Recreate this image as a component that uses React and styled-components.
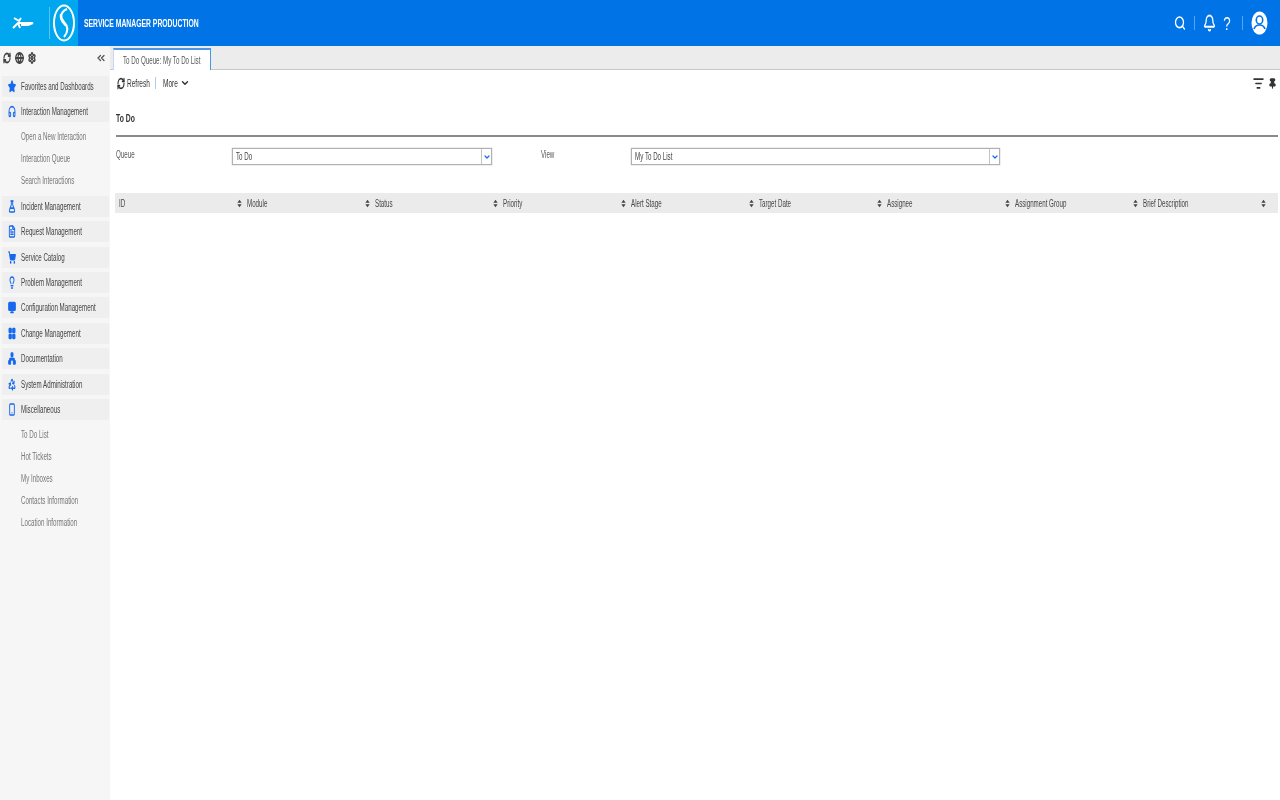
import React from "react";
import styled, { createGlobalStyle } from "styled-components";
import {
  Bell,
  ChevronDown,
  ChevronsLeft,
  Search,
  RefreshCw,
  Star,
  Headphones,
  FlaskConical,
  FileText,
  ShoppingCart,
  Lightbulb,
  Monitor,
  LayoutGrid,
  Network,
  Recycle,
  Smartphone,
  Settings,
  Pin,
  ListFilter,
  Globe,
} from "lucide-react";

const GlobalStyle = createGlobalStyle`
  html, body {
    margin: 0;
    height: 100%;
    background: #fff;
    font-family: "Liberation Sans", Arial, sans-serif;
  }
  #root {
    height: 100%;
  }
`;

const Page = styled.div`
  width: 1280px;
  height: 800px;
  display: flex;
  flex-direction: column;
  overflow: hidden;
  filter: blur(0.4px);
`;

// the screenshot is squeezed sideways, so the text is too
const Squeezed = styled.span`
  display: inline-block;
  white-space: nowrap;
  transform: scaleX(0.62);
  transform-origin: left center;
`;

const Header = styled.header`
  height: 46px;
  flex: none;
  display: flex;
  align-items: center;
  background: #0073e7;
  color: #fff;
`;

const Brand = styled.div`
  width: 78px;
  height: 100%;
  flex: none;
  display: flex;
  align-items: center;
  background: #00a7ee;
`;

const BrandBird = styled.div`
  width: 50px;
  height: 32px;
  flex: none;
  display: flex;
  justify-content: center;
  align-items: center;
  padding-right: 4px;
  box-sizing: border-box;
  border-right: 1px solid rgba(255, 255, 255, 0.35);
`;

const BrandMark = styled.div`
  flex: 1;
  display: flex;
  justify-content: center;
`;

const ProductName = styled.div`
  margin-left: 6px;
  font-size: 11px;
  font-weight: 700;
`;

const HeaderTools = styled.div`
  margin-left: auto;
  margin-right: 12px;
  display: flex;
  align-items: center;
  gap: 8px;
`;

const ToolDivider = styled.span`
  width: 1px;
  height: 14px;
  background: rgba(255, 255, 255, 0.35);
`;

const HelpMark = styled.span`
  width: 10px;
  margin: 0 2px 0 -2px;
  display: flex;
  justify-content: center;
  font-size: 19px;
  line-height: 1;
  transform: scaleX(0.7);
`;

const Body = styled.div`
  flex: 1;
  display: flex;
  min-height: 0;
`;

const Sidebar = styled.aside`
  width: 110px;
  flex: none;
  background: #f6f6f6;
  display: flex;
  flex-direction: column;
`;

const SideTop = styled.div`
  height: 24px;
  display: flex;
  align-items: center;
  padding: 0 3px;
  gap: 4px;
  color: #444;
  margin-bottom: 6px;
`;

const Collapse = styled.span`
  margin-left: auto;
  display: flex;
  color: #555;
`;

const NavItem = styled.div`
  height: 21px;
  margin: 0 1px 4.4px 2px;
  padding-left: 6px;
  display: flex;
  align-items: center;
  gap: 5px;
  background: #efefef;
  font-size: 10px;
  color: #444;
  svg {
    color: #1668ef;
    flex: none;
  }
`;

const SubList = styled.div`
  display: flex;
  flex-direction: column;
  margin-top: -1px;
  padding-bottom: 4px;
`;

const SubItem = styled.div`
  height: 22px;
  padding-left: 21px;
  display: flex;
  align-items: center;
  font-size: 10px;
  color: #777;
`;

const Main = styled.main`
  flex: 1;
  min-width: 0;
  display: flex;
  flex-direction: column;
`;

const TabStrip = styled.div`
  height: 24px;
  flex: none;
  box-sizing: border-box;
  display: flex;
  align-items: flex-end;
  padding-left: 3px;
  background: #ececec;
  border-bottom: 1px solid #c8c8c8;
`;

const Tab = styled.div`
  width: 98px;
  height: 22px;
  margin-bottom: -1px;
  padding-left: 9px;
  display: flex;
  align-items: center;
  box-sizing: border-box;
  background: #fff;
  border-top: 2px solid #4a97e8;
  border-left: 1px solid #c5daf2;
  border-right: 1px solid #4a97e8;
  font-size: 10px;
  color: #555;
`;

const Toolbar = styled.div`
  height: 26px;
  flex: none;
  display: flex;
  align-items: center;
  padding: 0 3px 0 7px;
  font-size: 10.5px;
  color: #333;
`;

const ToolButton = styled.span`
  width: ${(props) => props.$width}px;
  flex: none;
  display: flex;
  align-items: center;
  gap: 2px;
  svg {
    flex: none;
  }
`;

const ToolSeparator = styled.span`
  width: 1px;
  height: 12px;
  margin-right: 7px;
  background: #a9cdf3;
`;

const ToolEnd = styled.span`
  margin-left: auto;
  display: flex;
  align-items: center;
  gap: 4px;
  color: #333;
`;

const Content = styled.div`
  padding: 0 2px 0 6px;
`;

const Title = styled.h1`
  margin: 0;
  height: 41px;
  display: flex;
  align-items: center;
  padding-top: 4px;
  box-sizing: border-box;
  font-size: 11px;
  font-weight: 700;
  color: #333;
  border-bottom: 2px solid #8a8a8a;
`;

const FilterRow = styled.div`
  display: flex;
  align-items: flex-start;
  margin-top: 11px;
`;

const FieldLabel = styled.label`
  width: ${(props) => props.$width}px;
  flex: none;
  padding-top: 1px;
  font-size: 10px;
  color: #555;
`;

const SelectBox = styled.div`
  width: ${(props) => props.$width}px;
  height: 17px;
  flex: none;
  display: flex;
  box-sizing: border-box;
  border: 1px solid #b0b0b0;
  box-shadow: 0 0 1px #999;
  background: #fff;
`;

const SelectValue = styled.span`
  flex: 1;
  padding-left: 3px;
  font-size: 10px;
  line-height: 15px;
  color: #444;
`;

const SelectArrow = styled.span`
  width: 9px;
  display: flex;
  align-items: center;
  justify-content: center;
  border-left: 1px solid #c4c4c4;
  color: #1668ef;
`;

const FieldGap = styled.div`
  width: 49px;
  flex: none;
`;

const Grid = styled.div`
  margin: 28px 0 0 -1px;
  height: 20px;
  display: grid;
  grid-template-columns: repeat(9, 128px) 12px;
  background: #ebebeb;
`;

const Column = styled.div`
  display: flex;
  align-items: center;
  padding: 1px 0 0 4px;
  font-size: 10px;
  color: #444;
`;

const SortMark = styled.svg`
  margin-left: auto;
  margin-right: 1px;
  width: 5px;
  height: 9px;
`;

const NAV_TOP = [
  { label: "Favorites and Dashboards", icon: Star, filled: true },
  { label: "Interaction Management", icon: Headphones },
];

const NAV_MIDDLE = [
  { label: "Incident Management", icon: FlaskConical },
  { label: "Request Management", icon: FileText },
  { label: "Service Catalog", icon: ShoppingCart, filled: true },
  { label: "Problem Management", icon: Lightbulb },
  { label: "Configuration Management", icon: Monitor, filled: true },
  { label: "Change Management", icon: LayoutGrid, filled: true },
  { label: "Documentation", icon: Network, filled: true },
  { label: "System Administration", icon: Recycle },
  { label: "Miscellaneous", icon: Smartphone },
];

const COLUMNS = [
  "ID",
  "Module",
  "Status",
  "Priority",
  "Alert Stage",
  "Target Date",
  "Assignee",
  "Assignment Group",
  "Brief Description",
];

const Sort = () => (
  <SortMark viewBox="0 0 6 10">
    <path d="M3 0.5 5.6 4H0.4zM3 9.5 0.4 6h5.2z" fill="#444" />
  </SortMark>
);

const Nav = ({ item }) => {
  const Icon = item.icon;
  return (
    <NavItem>
      <Icon
        width={8}
        height={13}
        strokeWidth={2.8}
        fill={item.filled ? "currentColor" : "none"}
        preserveAspectRatio="none"
      />
      <Squeezed>{item.label}</Squeezed>
    </NavItem>
  );
};

const Sub = ({ children }) => (
  <SubItem>
    <Squeezed>{children}</Squeezed>
  </SubItem>
);

const SelectField = ({ width, value }) => (
  <SelectBox $width={width}>
    <SelectValue>
      <Squeezed>{value}</Squeezed>
    </SelectValue>
    <SelectArrow>
      <ChevronDown size={8} strokeWidth={3.6} />
    </SelectArrow>
  </SelectBox>
);

export default function App() {
  return (
    <Page>
      <GlobalStyle />
      <Header>
        <Brand>
          <BrandBird>
            <svg width="24" height="16" viewBox="0 0 24 16" fill="none" stroke="#fff" strokeWidth="2">
              <path d="M3 3l5 3 2-3M2 13l5-5 2 5M8 8h14l-5 2H10" />
            </svg>
          </BrandBird>
          <BrandMark>
            <svg width="24" height="40" viewBox="0 0 24 40" fill="none" stroke="#fff" strokeWidth="2">
              <ellipse cx="12" cy="20" rx="10" ry="17.5" />
              <path d="M15 6c-7 3-7 9-3 13s5 9 0 15M9 11c-2 6 3 9 5 12" />
            </svg>
          </BrandMark>
        </Brand>
        <ProductName>
          <Squeezed>SERVICE MANAGER PRODUCTION</Squeezed>
        </ProductName>
        <HeaderTools>
          <Search width={12} height={16} strokeWidth={2.6} preserveAspectRatio="none" />
          <ToolDivider />
          <Bell width={13} height={18} strokeWidth={2.4} preserveAspectRatio="none" />
          <HelpMark>?</HelpMark>
          <ToolDivider />
          <svg width="17" height="24" viewBox="0 0 17 24">
            <ellipse cx="8.5" cy="12" rx="8" ry="11.5" fill="#fff" />
            <ellipse cx="8.5" cy="9" rx="3.2" ry="4" fill="none" stroke="#0073e7" strokeWidth="1.6" />
            <path d="M3 18c1-3 3-4 5.500-4s4.500 1 5.500 4" fill="none" stroke="#0073e7" strokeWidth="1.6" />
          </svg>
        </HeaderTools>
      </Header>
      <Body>
        <Sidebar>
          <SideTop>
            <RefreshCw width={8} height={12} strokeWidth={3.6} preserveAspectRatio="none" />
            <Globe width={9} height={12} strokeWidth={3.6} preserveAspectRatio="none" />
            <Settings width={8} height={12} strokeWidth={3.6} preserveAspectRatio="none" />
            <Collapse>
              <ChevronsLeft size={12} strokeWidth={2.6} />
            </Collapse>
          </SideTop>
          {NAV_TOP.map((item) => (
            <Nav key={item.label} item={item} />
          ))}
          <SubList>
            <Sub>Open a New Interaction</Sub>
            <Sub>Interaction Queue</Sub>
            <Sub>Search Interactions</Sub>
          </SubList>
          {NAV_MIDDLE.map((item) => (
            <Nav key={item.label} item={item} />
          ))}
          <SubList>
            <Sub>To Do List</Sub>
            <Sub>Hot Tickets</Sub>
            <Sub>My Inboxes</Sub>
            <Sub>Contacts Information</Sub>
            <Sub>Location Information</Sub>
          </SubList>
        </Sidebar>
        <Main>
          <TabStrip>
            <Tab>
              <Squeezed>To Do Queue: My To Do List</Squeezed>
            </Tab>
          </TabStrip>
          <Toolbar>
            <ToolButton $width={38}>
              <RefreshCw width={8} height={13} strokeWidth={3.4} preserveAspectRatio="none" />
              <Squeezed>Refresh</Squeezed>
            </ToolButton>
            <ToolSeparator />
            <ToolButton $width={17}>
              <Squeezed>More</Squeezed>
            </ToolButton>
            <ChevronDown size={10} strokeWidth={3.4} />
            <ToolEnd>
              <ListFilter width={11} height={15} strokeWidth={2.6} preserveAspectRatio="none" />
              <Pin width={9} height={11} strokeWidth={3} fill="#333" preserveAspectRatio="none" />
            </ToolEnd>
          </Toolbar>
          <Content>
            <Title>
              <Squeezed>To Do</Squeezed>
            </Title>
            <FilterRow>
              <FieldLabel $width={116}>
                <Squeezed>Queue</Squeezed>
              </FieldLabel>
              <SelectField width={260} value="To Do" />
              <FieldGap />
              <FieldLabel $width={90}>
                <Squeezed>View</Squeezed>
              </FieldLabel>
              <SelectField width={369} value="My To Do List" />
            </FilterRow>
            <Grid>
              {COLUMNS.map((name) => (
                <Column key={name}>
                  <Squeezed>{name}</Squeezed>
                  <Sort />
                </Column>
              ))}
            </Grid>
          </Content>
        </Main>
      </Body>
    </Page>
  );
}
